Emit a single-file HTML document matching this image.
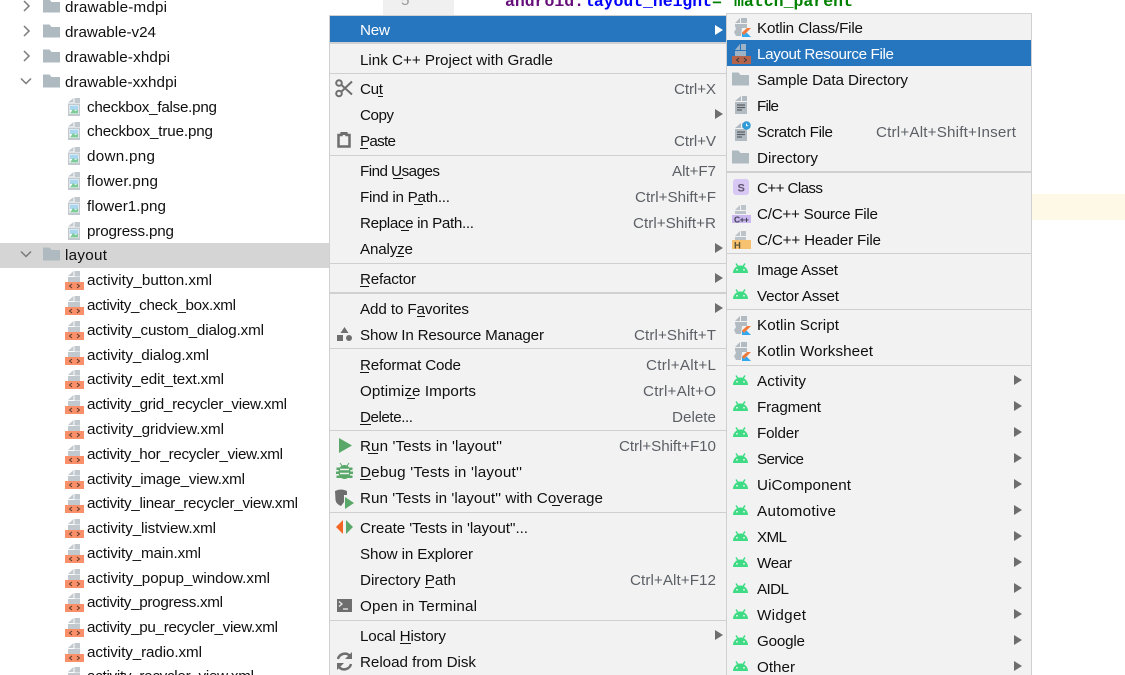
<!DOCTYPE html>
<html lang="en"><head><meta charset="utf-8"><title>Context menu</title>
<style>
html,body{margin:0;padding:0;background:#fff;overflow:hidden}
svg{display:block}
text{font-family:"Liberation Sans","Noto Sans CJK SC",sans-serif;font-size:15.2px;fill:#101010}
.s text{fill:#5c6066}
.mono{font-family:"Liberation Mono",monospace;font-size:16.5px;font-weight:bold}
</style></head><body>
<svg width="1125" height="675" viewBox="0 0 1125 675" xmlns="http://www.w3.org/2000/svg">
<defs>
<g id="folder"><path d="M0-6.500h6.500l2 2.500H17V6.500H0z" fill="#afb9c0"/></g>
<path id="chevR" d="M0-5l5 5-5 5" fill="none" stroke="#7b7b7b" stroke-width="1.500"/>
<path id="chevD" d="M-5-2.500l5 5 5-5" fill="none" stroke="#7b7b7b" stroke-width="1.500"/>
<g id="png"><path d="M6.500-9H12v5H6.500zM0-4.500L5.500-9v4.500zM0-3.500h12V9H0z" fill="#c2c9ce"/><rect x="1.500" y="-2" width="9" height="9" fill="#fff"/><path d="M2-1.500h8V3H2z" fill="#a9d7ef"/><path d="M2 6.500L5 2l2.500 2L10 2.500v4z" fill="#7ccb98"/></g>
<g id="xml"><path d="M9.500-9H15v5.500H9.500zM3-4L8.500-9v5zM3-3h12V2H3z" fill="#c2c9ce"/><rect x="0" y="2" width="19" height="8" fill="#fa9069"/><path d="M7 4L4.500 6 7 8M12 4l2.500 2L12 8" fill="none" stroke="#5b3a2c" stroke-width="1"/></g>
<g id="android"><path d="M-7.500 4a7.500 7.500 0 0 1 15 0z" fill="#3ddc84"/><path d="M-4.500-5.500l2 3M4.500-5.500l-2 3" stroke="#3ddc84" stroke-width="1.500"/><circle cx="-3.500" cy="0.800" r="0.900" fill="#f2f2f2"/><circle cx="3.500" cy="0.800" r="0.900" fill="#f2f2f2"/></g>
<g id="kotlin"><path d="M7-9H13v5H7zM1-4L6-9v5zM1-3H13V1H8L7 9H2L0 5 2 2 1-1z" fill="#b2bbc2"/><path d="M8 10V1h9v9z" fill="#f2f2f2"/><path d="M8 10V5.500L13 1h4z" fill="#f0793c"/><path d="M8 10l4.500-4.500L17 10zM8 10V6l3 3z" fill="#31a8f0"/></g>
<g id="doc"><path d="M5-9h5v5H5zM-2-4L4-9v5zM-2-3h12V9H-2z" fill="#b2bbc2"/><path d="M0 0h8M0 2.500h8M0 5h5" stroke="#5b6066" stroke-width="1.300"/></g>
<path id="tri" d="M0-5l8 5-8 5z" fill="#6e6e6e"/>
</defs>

<!-- editor background -->
<rect x="383" y="0" width="71" height="15" fill="#f0f0f0"/>
<rect x="1032" y="194" width="93" height="26" fill="#fef9e6"/>
<text x="401" y="5" style="fill:#999">5</text>
<text class="mono" x="505" y="6" textLength="79" style="fill:#660e7a">android:</text>
<text class="mono" x="584" y="6" textLength="128" style="fill:#0000ff">layout_height</text>
<text class="mono" x="712" y="6" textLength="10" style="fill:#008000">=</text>
<text class="mono" x="734" y="6" textLength="119" style="fill:#008000">match_parent</text>

<!-- tree -->
<rect x="0" y="243" width="330" height="25" fill="#d5d5d5"/>
<use href="#chevR" x="24" y="6"/><use href="#chevR" x="24" y="31"/><use href="#chevR" x="24" y="56"/>
<use href="#chevD" x="26" y="81"/><use href="#chevD" x="26" y="254"/>
<use href="#folder" x="43" y="6"/><use href="#folder" x="43" y="31"/><use href="#folder" x="43" y="56"/><use href="#folder" x="43" y="81"/><use href="#folder" x="43" y="254"/>
<text x="65" y="12" textLength="102">drawable-mdpi</text>
<text x="65" y="37" textLength="91">drawable-v24</text>
<text x="65" y="62" textLength="105">drawable-xhdpi</text>
<text x="65" y="87" textLength="112">drawable-xxhdpi</text>
<use href="#png" x="68" y="107"/><text x="87" y="112" textLength="130">checkbox_false.png</text>
<use href="#png" x="68" y="131"/><text x="87" y="136" textLength="126">checkbox_true.png</text>
<use href="#png" x="68" y="156"/><text x="87" y="161" textLength="68">down.png</text>
<use href="#png" x="68" y="181"/><text x="87" y="186" textLength="71">flower.png</text>
<use href="#png" x="68" y="206"/><text x="87" y="211" textLength="79">flower1.png</text>
<use href="#png" x="68" y="231"/><text x="87" y="236" textLength="87">progress.png</text>
<text x="65" y="260" textLength="42">layout</text>
<use href="#xml" x="65" y="280"/><text x="87" y="285" textLength="125">activity_button.xml</text>
<use href="#xml" x="65" y="305"/><text x="87" y="310" textLength="149">activity_check_box.xml</text>
<use href="#xml" x="65" y="330"/><text x="87" y="335" textLength="177">activity_custom_dialog.xml</text>
<use href="#xml" x="65" y="355"/><text x="87" y="360" textLength="122">activity_dialog.xml</text>
<use href="#xml" x="65" y="379"/><text x="87" y="384" textLength="137">activity_edit_text.xml</text>
<use href="#xml" x="65" y="404"/><text x="87" y="409" textLength="200">activity_grid_recycler_view.xml</text>
<use href="#xml" x="65" y="429"/><text x="87" y="434" textLength="137">activity_gridview.xml</text>
<use href="#xml" x="65" y="454"/><text x="87" y="459" textLength="196">activity_hor_recycler_view.xml</text>
<use href="#xml" x="65" y="479"/><text x="87" y="484" textLength="158">activity_image_view.xml</text>
<use href="#xml" x="65" y="503"/><text x="87" y="508" textLength="211">activity_linear_recycler_view.xml</text>
<use href="#xml" x="65" y="528"/><text x="87" y="533" textLength="129">activity_listview.xml</text>
<use href="#xml" x="65" y="553"/><text x="87" y="558" textLength="114">activity_main.xml</text>
<use href="#xml" x="65" y="578"/><text x="87" y="583" textLength="183">activity_popup_window.xml</text>
<use href="#xml" x="65" y="602"/><text x="87" y="607" textLength="136">activity_progress.xml</text>
<use href="#xml" x="65" y="627"/><text x="87" y="632" textLength="191">activity_pu_recycler_view.xml</text>
<use href="#xml" x="65" y="652"/><text x="87" y="657" textLength="115">activity_radio.xml</text>
<use href="#xml" x="65" y="676"/><text x="87" y="681" textLength="167">activity_recycler_view.xml</text>

<!-- main menu -->
<rect x="329.500" y="15.500" width="398" height="665" fill="#f2f2f2" stroke="#d0d0d0"/>
<rect x="330" y="16" width="397" height="26" fill="#2675bf"/>
<g fill="#d0d0d0">
<rect x="330" y="42" width="397" height="2"/><rect x="330" y="73" width="397" height="1"/><rect x="330" y="155" width="397" height="1"/><rect x="330" y="263" width="397" height="1"/><rect x="330" y="292" width="397" height="2"/><rect x="330" y="348" width="397" height="1"/><rect x="330" y="430" width="397" height="1"/><rect x="330" y="512" width="397" height="1"/><rect x="330" y="620" width="397" height="1"/>
</g>
<text x="360" y="35" textLength="30" style="fill:#fff">New</text>
<path d="M715 25l8 5-8 5z" fill="#fff"/>
<text x="360" y="65" textLength="193">Link C++ Project with Gradle</text>
<text x="360" y="94" textLength="23">Cut</text>
<text x="360" y="120" textLength="34">Copy</text>
<text x="360" y="146" textLength="36">Paste</text>
<text x="360" y="176" textLength="80">Find Usages</text>
<text x="360" y="202" textLength="90">Find in Path...</text>
<text x="360" y="228" textLength="114">Replace in Path...</text>
<text x="360" y="254" textLength="53">Analyze</text>
<text x="360" y="284" textLength="56">Refactor</text>
<text x="360" y="314" textLength="109">Add to Favorites</text>
<text x="360" y="340" textLength="184">Show In Resource Manager</text>
<text x="360" y="370" textLength="101">Reformat Code</text>
<text x="360" y="396" textLength="116">Optimize Imports</text>
<text x="360" y="422" textLength="53">Delete...</text>
<text x="360" y="451" textLength="142">Run 'Tests in 'layout''</text>
<text x="360" y="477" textLength="162">Debug 'Tests in 'layout''</text>
<text x="360" y="503" textLength="243">Run 'Tests in 'layout'' with Coverage</text>
<text x="360" y="533" textLength="168">Create 'Tests in 'layout''...</text>
<text x="360" y="559" textLength="113">Show in Explorer</text>
<text x="360" y="585" textLength="96">Directory Path</text>
<text x="360" y="611" textLength="117">Open in Terminal</text>
<text x="360" y="641" textLength="86">Local History</text>
<text x="360" y="667" textLength="116">Reload from Disk</text>
<g fill="#141414">
<rect x="378" y="96" width="5" height="1"/><rect x="360" y="148" width="8" height="1"/><rect x="393" y="178" width="10" height="1"/><rect x="414" y="204" width="9" height="1"/><rect x="401" y="230" width="8" height="1"/><rect x="396" y="256" width="8" height="1"/><rect x="360" y="286" width="9" height="1"/><rect x="417" y="316" width="8" height="1"/><rect x="360" y="372" width="9" height="1"/><rect x="407" y="398" width="8" height="1"/><rect x="360" y="424" width="11" height="1"/><rect x="368" y="453" width="10" height="1"/><rect x="360" y="479" width="11" height="1"/><rect x="552" y="505" width="8" height="1"/><rect x="425" y="587" width="9" height="1"/><rect x="400" y="643" width="11" height="1"/>
</g>
<g class="s">
<text x="674" y="94" textLength="42">Ctrl+X</text>
<text x="674" y="146" textLength="42">Ctrl+V</text>
<text x="672" y="176" textLength="44">Alt+F7</text>
<text x="635" y="202" textLength="81">Ctrl+Shift+F</text>
<text x="633" y="228" textLength="83">Ctrl+Shift+R</text>
<text x="634" y="340" textLength="82">Ctrl+Shift+T</text>
<text x="646" y="370" textLength="70">Ctrl+Alt+L</text>
<text x="643" y="396" textLength="73">Ctrl+Alt+O</text>
<text x="672" y="422" textLength="44">Delete</text>
<text x="619" y="451" textLength="97">Ctrl+Shift+F10</text>
<text x="630" y="585" textLength="86">Ctrl+Alt+F12</text>
</g>
<use href="#tri" x="715" y="114"/><use href="#tri" x="715" y="248"/><use href="#tri" x="715" y="278"/><use href="#tri" x="715" y="308"/><use href="#tri" x="715" y="635"/>

<!-- main menu icons -->
<g fill="none" stroke="#6e6e6e" stroke-width="2"><circle cx="339" cy="83" r="2.800"/><circle cx="339" cy="93.500" r="2.800"/><path d="M341.500 85L352 94.500M341.500 91.500L352 81.500"/></g>
<path d="M338.500 135h3v-1.500h5v1.500h3v11.500h-11z" fill="none" stroke="#6e6e6e" stroke-width="2.500"/><rect x="341" y="132" width="6" height="3" fill="#6e6e6e"/>
<path d="M344.500 327l4 6h-8zM337 335h6v6h-6z" fill="#6e6e6e"/><circle cx="349" cy="338" r="3" fill="#6e6e6e"/>
<path d="M339 438l13 7.500-13 7.500z" fill="#59a869"/>
<g fill="#59a869"><ellipse cx="344.500" cy="472" rx="6" ry="7"/><path d="M337 468h15v1.500H337zM336.500 472h16v1.500h-16zM337 476h15v1.500H337zM340 463l2 3M349 463l-2 3" stroke="#59a869"/></g>
<path d="M340 469.500h9M340 473.500h9" stroke="#f2f2f2" stroke-width="1.500"/>
<path d="M335 491q6-3 12 0v4h-3v7l-3 4q-5-2-5.500-6z" fill="#6e6e6e"/><path d="M345 497l9 6-9 6z" fill="#59a869"/>
<path d="M343 520v14l-7-7z" fill="#f26522"/><path d="M346 520v14l7-7z" fill="#59a869"/>
<rect x="337" y="599" width="15" height="13" fill="#6e6e6e"/><path d="M339 601.500l3 2.500-3 2.500M343 609h5" fill="none" stroke="#f2f2f2" stroke-width="1.200"/>
<path d="M338 659a7 7 0 0 1 12-3M351 664a7 7 0 0 1-12 3" fill="none" stroke="#6e6e6e" stroke-width="2.500"/><path d="M352 652v7h-7zM337 670v-7h7z" fill="#6e6e6e"/>

<!-- submenu -->
<rect x="726.500" y="13.500" width="305" height="665" fill="#f2f2f2" stroke="#d0d0d0"/>
<rect x="727" y="40" width="304" height="26" fill="#2675bf"/>
<g fill="#d0d0d0">
<rect x="727" y="171" width="304" height="2"/><rect x="727" y="253" width="304" height="1"/><rect x="727" y="309" width="304" height="1"/><rect x="727" y="365" width="304" height="1"/>
</g>
<text x="757" y="33" textLength="106">Kotlin Class/File</text>
<text x="757" y="59" textLength="137" style="fill:#fff">Layout Resource File</text>
<text x="757" y="85" textLength="151">Sample Data Directory</text>
<text x="757" y="111" textLength="22">File</text>
<text x="757" y="137" textLength="76">Scratch File</text>
<text x="876" y="137" textLength="140" style="fill:#5c6066">Ctrl+Alt+Shift+Insert</text>
<text x="757" y="163" textLength="61">Directory</text>
<text x="757" y="193" textLength="66">C++ Class</text>
<text x="757" y="219" textLength="121">C/C++ Source File</text>
<text x="757" y="245" textLength="124">C/C++ Header File</text>
<text x="757" y="275" textLength="81">Image Asset</text>
<text x="757" y="301" textLength="82">Vector Asset</text>
<text x="757" y="330" textLength="82">Kotlin Script</text>
<text x="757" y="356" textLength="116">Kotlin Worksheet</text>
<text x="757" y="386" textLength="49">Activity</text>
<text x="757" y="412" textLength="64">Fragment</text>
<text x="757" y="438" textLength="42">Folder</text>
<text x="757" y="464" textLength="47">Service</text>
<text x="757" y="490" textLength="94">UiComponent</text>
<text x="757" y="516" textLength="79">Automotive</text>
<text x="757" y="542" textLength="30">XML</text>
<text x="757" y="568" textLength="35">Wear</text>
<text x="757" y="594" textLength="32">AIDL</text>
<text x="757" y="620" textLength="49">Widget</text>
<text x="757" y="646" textLength="48">Google</text>
<text x="757" y="672" textLength="38">Other</text>

<use href="#kotlin" x="734" y="27"/>
<path d="M741 44h5v6h-5zM735 50l5-6v6zM735 51h11v5h-11z" fill="#9eb3c6"/><rect x="732" y="56" width="19" height="8" fill="#b5644c"/><path d="M739 58l-2.500 2 2.500 2M744 58l2.500 2-2.500 2" fill="none" stroke="#33383c" stroke-width="1"/>
<use href="#folder" x="732" y="79"/>
<use href="#doc" x="737" y="105"/>
<use href="#doc" x="737" y="132"/><circle cx="746.500" cy="125.500" r="4.200" fill="#2f9bd8"/><path d="M746.500 123.500v2.200h1.800" stroke="#fff" fill="none" stroke-width="0.900"/>
<use href="#folder" x="732" y="157"/>
<rect x="733" y="179" width="16" height="16" rx="3" fill="#d8c8f4"/><text x="737.500" y="191.500" style="font-size:11px;font-weight:bold;fill:#5f5670" textLength="7">S</text>
<path d="M741 205h5v5h-5zM735 210l5-5v5zM735 211h11v3h-11z" fill="#bcc4ca"/><rect x="732" y="215" width="19" height="8" fill="#cbb8ee"/><text x="734" y="222.500" style="font-size:8.500px;font-weight:bold;fill:#3d3f50" textLength="15">C++</text>
<path d="M741 231h5v5h-5zM735 236l5-5v5zM735 237h11v3h-11z" fill="#bcc4ca"/><rect x="732" y="240" width="19" height="9" fill="#f6c26f"/><text x="734" y="248.500" style="font-size:9.500px;font-weight:bold;fill:#5b5238">H</text>
<use href="#android" x="740.500" y="269"/><use href="#android" x="740.500" y="295"/>
<use href="#kotlin" x="734" y="325"/><use href="#kotlin" x="734" y="351"/>
<use href="#android" x="740.500" y="381"/><use href="#android" x="740.500" y="407"/><use href="#android" x="740.500" y="433"/><use href="#android" x="740.500" y="459"/><use href="#android" x="740.500" y="485"/><use href="#android" x="740.500" y="511"/><use href="#android" x="740.500" y="537"/><use href="#android" x="740.500" y="563"/><use href="#android" x="740.500" y="589"/><use href="#android" x="740.500" y="615"/><use href="#android" x="740.500" y="641"/><use href="#android" x="740.500" y="667"/>
<use href="#tri" x="1014" y="380"/><use href="#tri" x="1014" y="406"/><use href="#tri" x="1014" y="432"/><use href="#tri" x="1014" y="458"/><use href="#tri" x="1014" y="484"/><use href="#tri" x="1014" y="510"/><use href="#tri" x="1014" y="536"/><use href="#tri" x="1014" y="562"/><use href="#tri" x="1014" y="588"/><use href="#tri" x="1014" y="614"/><use href="#tri" x="1014" y="640"/><use href="#tri" x="1014" y="666"/>
</svg>
</body></html>
